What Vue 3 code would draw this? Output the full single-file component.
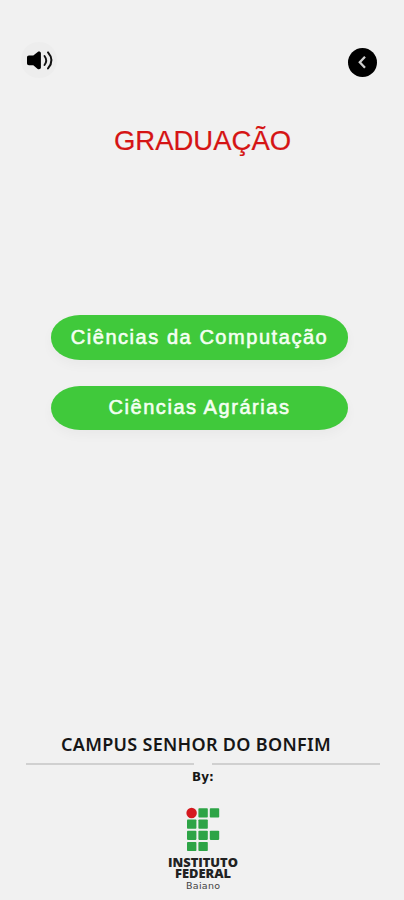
<script setup>
import { ref } from 'vue'

const courses = ref([
  { id: 'computacao', name: 'Ciências da Computação' },
  { id: 'agrarias', name: 'Ciências Agrárias' },
])

// linha e coluna de cada quadrado verde da marca
const squares = [
  [0, 1], [0, 2],
  [1, 0], [1, 1],
  [2, 0], [2, 1], [2, 2],
  [3, 0], [3, 1],
]
</script>

<template>
  <main class="screen">
    <header class="topbar">
      <button type="button" class="topbar__sound" aria-label="Som">
        <svg width="36" height="36" viewBox="0 0 36 36">
          <path d="M8 13.500h4.300l4.400-3.600c1.200-.9 3.200-.3 3.200 1.300v14.400c0 1.600-2 2.200-3.200 1.300l-4.400-3.700H8c-1.300 0-2-.7-2-2v-5.700c0-1.300.7-2 2-2z" fill="#000" />
          <path d="M23.500 14q3.400 4.500 0 9" fill="none" stroke="#111" stroke-width="1.900" stroke-linecap="round" />
          <path d="M27 10.400q7 8 0 16" fill="none" stroke="#111" stroke-width="2" stroke-linecap="round" />
        </svg>
      </button>
      <button type="button" class="topbar__back" aria-label="Voltar">
        <svg width="29" height="29" viewBox="0 0 29 29">
          <path d="M17 8.800l-5.200 5.500 5.200 5.500" fill="none" stroke="#d0d0d0" stroke-width="2.300" />
        </svg>
      </button>
    </header>

    <h1 class="title">GRADUAÇÃO</h1>

    <nav class="courses">
      <button v-for="course in courses" :key="course.id" type="button" class="course">
        {{ course.name }}
      </button>
    </nav>

    <footer class="footer">
      <p class="footer__campus">CAMPUS SENHOR DO BONFIM</p>
      <div class="footer__lines">
        <span></span>
        <span></span>
      </div>
      <p class="footer__by">By:</p>
      <div class="brand">
        <svg class="brand__mark" width="33" height="44" viewBox="0 0 33 44">
          <circle cx="4.600" cy="5" r="5.200" fill="#d5191f" />
          <rect
            v-for="[row, col] in squares"
            :key="`${row}-${col}`"
            :x="col * 11.400"
            :y="row * 11.200 + 0.300"
            width="9.400"
            height="9.200"
            rx="0.800"
            fill="#2da446"
          />
        </svg>
        <svg class="brand__name" width="74" height="37" viewBox="0 0 74 37">
          <text x="2" y="11.500" font-size="13" textLength="70" lengthAdjust="spacingAndGlyphs">INSTITUTO</text>
          <text x="9" y="22.500" font-size="13" textLength="56" lengthAdjust="spacingAndGlyphs">FEDERAL</text>
          <text x="20" y="33.500" font-size="9.500" textLength="34" class="brand__region">Baiano</text>
        </svg>
      </div>
    </footer>
  </main>
</template>

<style>
body {
  margin: 0;
  background: #f1f1f1;
}
</style>

<style scoped>
.screen {
  box-sizing: border-box;
  width: 404px;
  height: 900px;
  display: flex;
  flex-direction: column;
  overflow: hidden;
  background: #f1f1f1;
  font-family: 'Liberation Sans', Arial, sans-serif;
}

button {
  padding: 0;
  border: none;
  font-family: inherit;
  cursor: pointer;
}

svg {
  display: block;
  overflow: visible;
}

.topbar {
  display: flex;
  justify-content: space-between;
  align-items: flex-start;
  padding: 42px 27px 0 21px;
  height: 40px;
}

.topbar__sound {
  border-radius: 50%;
  background: #ededed;
}

.topbar__back {
  margin-top: 6px;
  border-radius: 50%;
  background: #000;
}

.title {
  margin: 43px 0 0;
  padding-left: 1px;
  color: #d51414;
  font-size: 27.500px;
  font-weight: 400;
  line-height: 32px;
  text-align: center;
  -webkit-text-stroke: 0.200px #d51414;
}

.courses {
  display: flex;
  flex-direction: column;
  gap: 26px;
  width: 297px;
  margin: 158px 0 0 51px;
}

.course {
  height: 44.500px;
  border-radius: 29px / 22px;
  background: #40c93b;
  box-shadow: 0 5px 12px rgba(0, 0, 0, 0.035);
  color: #f4fff2;
  font-size: 20px;
  letter-spacing: 1.550px;
  -webkit-text-stroke: 0.600px #f4fff2;
}

.footer {
  display: flex;
  flex-direction: column;
  align-items: center;
  margin-top: auto;
  padding: 0 0 8px 2px;
  color: #161616;
}

.footer p {
  margin: 0;
}

.footer .footer__campus {
  align-self: flex-start;
  padding-left: 59px;
  font-family: 'Noto Sans', sans-serif;
  font-size: 18px;
  font-weight: 600;
  letter-spacing: 0.300px;
  line-height: 24px;
  white-space: nowrap;
}

.footer__lines {
  display: flex;
  justify-content: space-between;
  width: 354px;
  margin-top: 7px;
}

.footer__lines span {
  width: 168px;
  height: 2px;
  background: #d0d0d0;
}

.footer .footer__by {
  margin-top: 4px;
  font-family: 'DejaVu Sans', sans-serif;
  font-size: 12px;
  font-weight: 700;
  line-height: 16px;
}

.brand {
  display: flex;
  flex-direction: column;
  align-items: center;
  margin-top: 23px;
}

.brand__name {
  margin-top: 3px;
  font-family: 'Open Sans', sans-serif;
  font-weight: 800;
  fill: #222;
}

.brand__region {
  fill: #444;
  font-family: 'DejaVu Sans', sans-serif;
  font-weight: 400;
}
</style>
